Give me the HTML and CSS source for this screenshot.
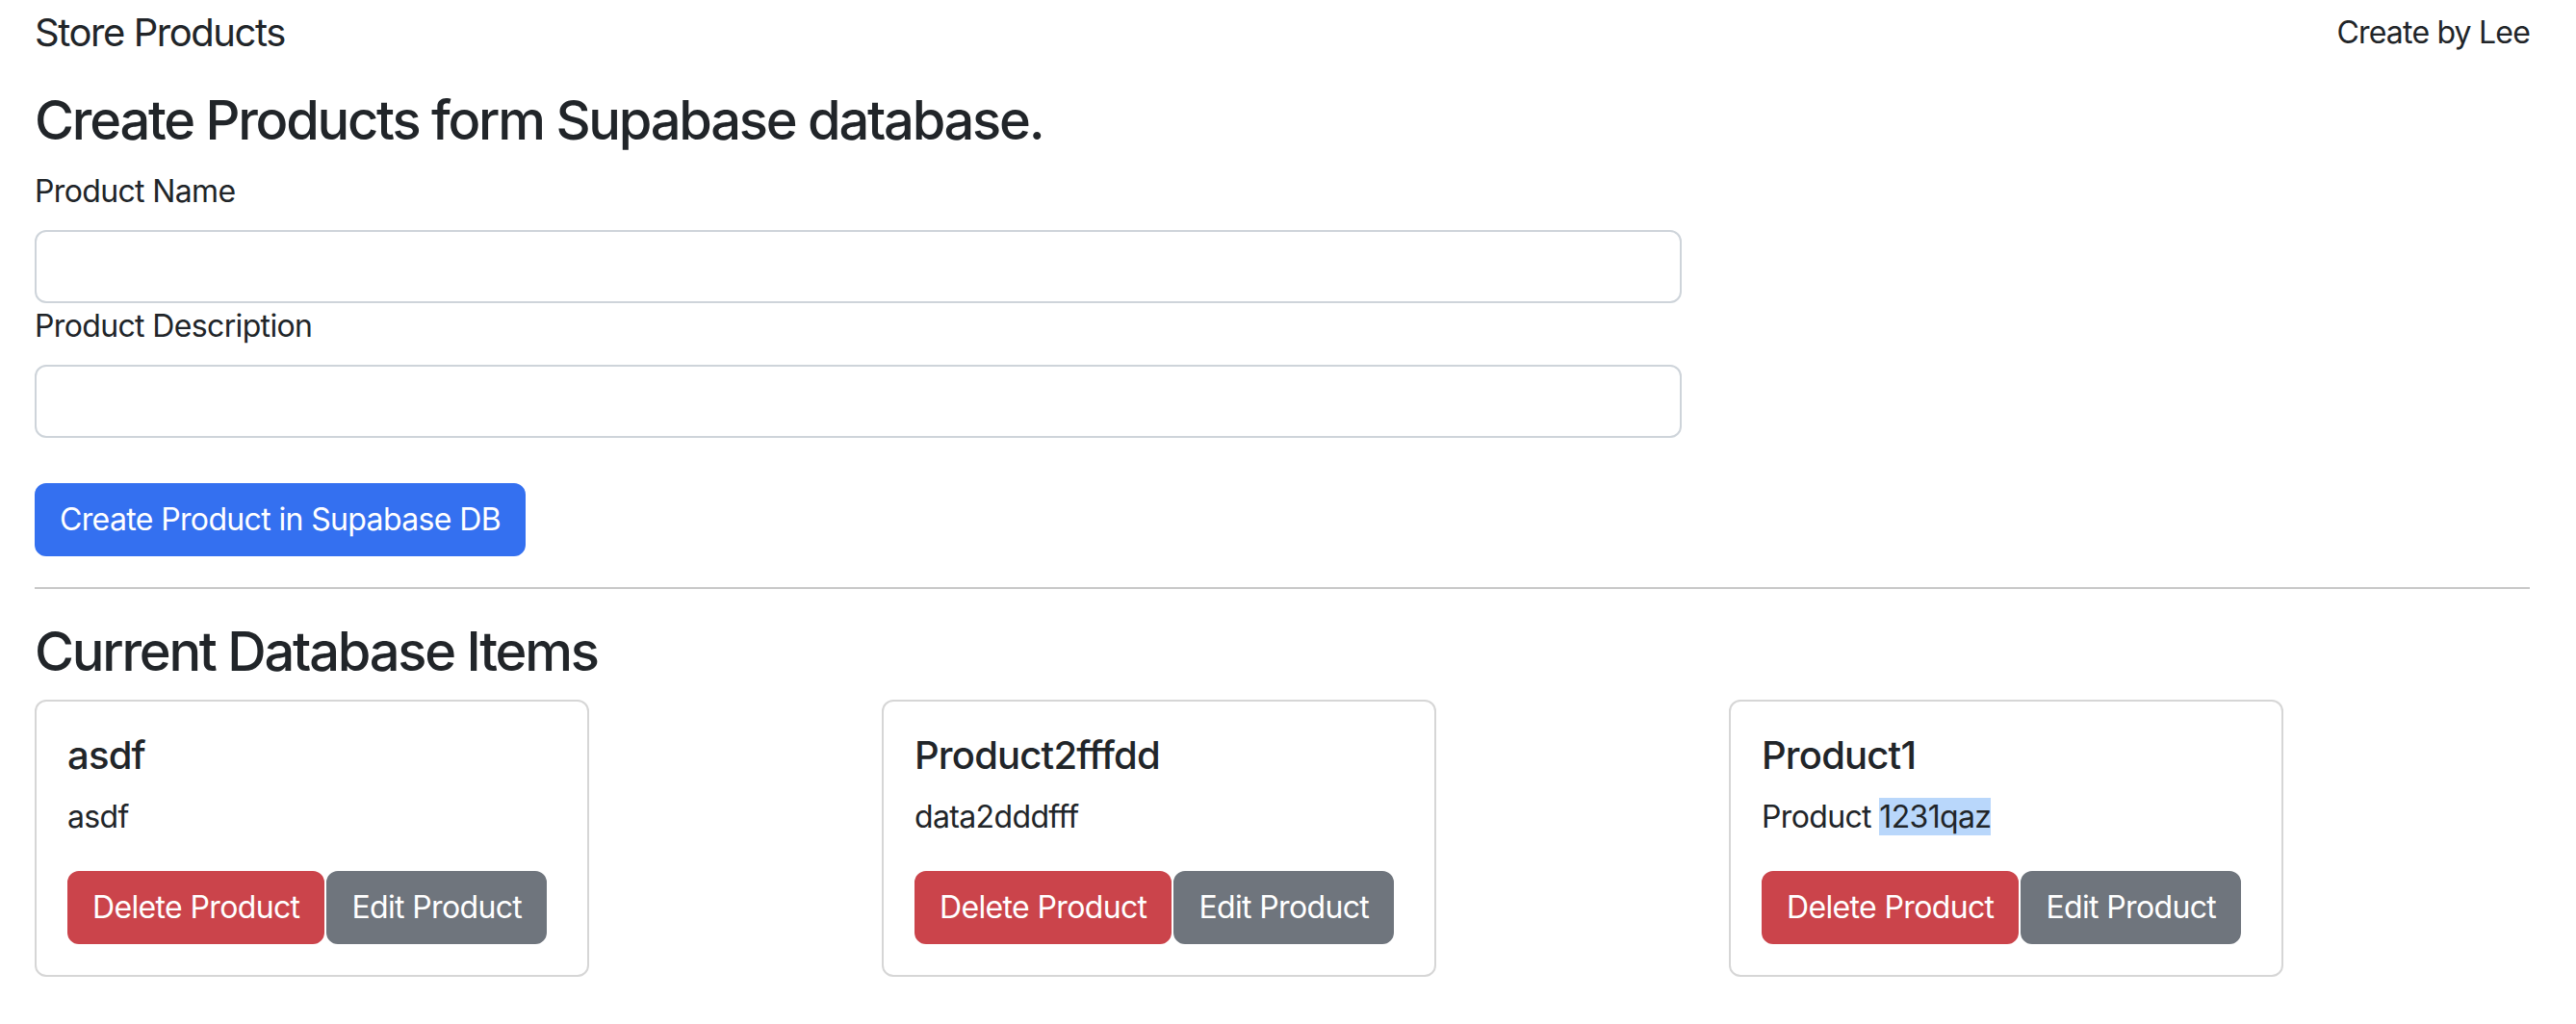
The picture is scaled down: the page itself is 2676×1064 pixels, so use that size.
FILE: index.html
```html
<!DOCTYPE html>
<html lang="en">
<head>
<meta charset="utf-8">
<title>Store Products</title>
<link rel="stylesheet" href="styles.css">
</head>
<body>
<div class="page">
  <nav class="topbar">
    <span class="brand">Store Products</span>
    <span class="credit">Create by Lee</span>
  </nav>
  <div class="form-col">
    <h3 class="heading">Create Products form Supabase database.</h3>
    <label class="label">Product Name</label>
    <input class="input" type="text">
    <label class="label">Product Description</label>
    <input class="input" type="text">
    <button class="btn btn-primary create-btn">Create Product in Supabase DB</button>
  </div>
  <hr class="divider">
  <h3 class="heading">Current Database Items</h3>
  <div class="cards">
    <div class="col">
      <div class="card">
        <h5 class="card-title">asdf</h5>
        <p class="card-text">asdf</p>
        <div class="actions"><button class="btn btn-danger">Delete Product</button><button class="btn btn-secondary">Edit Product</button></div>
      </div>
    </div>
    <div class="col">
      <div class="card">
        <h5 class="card-title">Product2fffdd</h5>
        <p class="card-text">data2dddfff</p>
        <div class="actions"><button class="btn btn-danger">Delete Product</button><button class="btn btn-secondary">Edit Product</button></div>
      </div>
    </div>
    <div class="col">
      <div class="card">
        <h5 class="card-title">Product1</h5>
        <p class="card-text">Product <span class="sel">1231qaz</span></p>
        <div class="actions"><button class="btn btn-danger">Delete Product</button><button class="btn btn-secondary">Edit Product</button></div>
      </div>
    </div>
  </div>
</div>
</body>
</html>
```
FILE: styles.css
```css
* { box-sizing: border-box; }
html, body { margin: 0; background: #fff; }
body {
  font-family: Inter, "Noto Sans", sans-serif;
  font-size: 32px;
  line-height: 48px;
  letter-spacing: -0.02em;
  color: #212529;
}
.page { padding: 0 48px 0 36px; }
.topbar {
  display: flex;
  justify-content: space-between;
  align-items: center;
  height: 68px;
}
.brand { font-size: 40px; line-height: 60px; letter-spacing: -0.036em; }
.credit { font-size: 32px; line-height: 48px; letter-spacing: -0.025em; }
.heading {
  font-size: 56px;
  line-height: 67px;
  font-weight: 500;
  letter-spacing: -0.04em;
  margin: 0 0 16px;
}
.form-col {
  width: 1711px;
  display: flex;
  flex-direction: column;
  align-items: flex-start;
  padding-top: 24px;
}
.label { display: block; margin-bottom: 16px; }
.input {
  display: block;
  width: 100%;
  height: 76px;
  border: 2px solid #ced4da;
  border-radius: 12px;
  padding: 12px 24px;
  font: inherit;
}
.btn {
  font: inherit;
  font-size: 32px;
  line-height: 48px;
  letter-spacing: -0.02em;
  padding: 12px 24px;
  border: 2px solid transparent;
  border-radius: 12px;
  color: #fff;
  cursor: pointer;
  white-space: nowrap;
  flex: none;
}
.btn-primary { background: #3470f0; border-color: #3470f0; }
.btn-danger { background: #cb444b; border-color: #cb444b; }
.btn-secondary { background: #6f757d; border-color: #6f757d; }
.create-btn { margin-top: 47px; }
.divider {
  margin: 32px 0;
  border: 0;
  border-top: 2px solid #c8c8c8;
}
.cards {
  display: grid;
  grid-template-columns: repeat(3, 1fr);
  margin: 0 -24px;
}
.col { padding: 0 24px; }
.card {
  width: 576px;
  border: 2px solid #d6d6d6;
  border-radius: 12px;
  padding: 32px;
}
.card-title {
  font-size: 40px;
  line-height: 48px;
  font-weight: 500;
  letter-spacing: -0.02em;
  margin: 0 0 16px;
}
.card-text { margin: 0 0 32px; }
.actions { display: flex; gap: 2px; }
.sel { background: #b9d7fb; }
```
